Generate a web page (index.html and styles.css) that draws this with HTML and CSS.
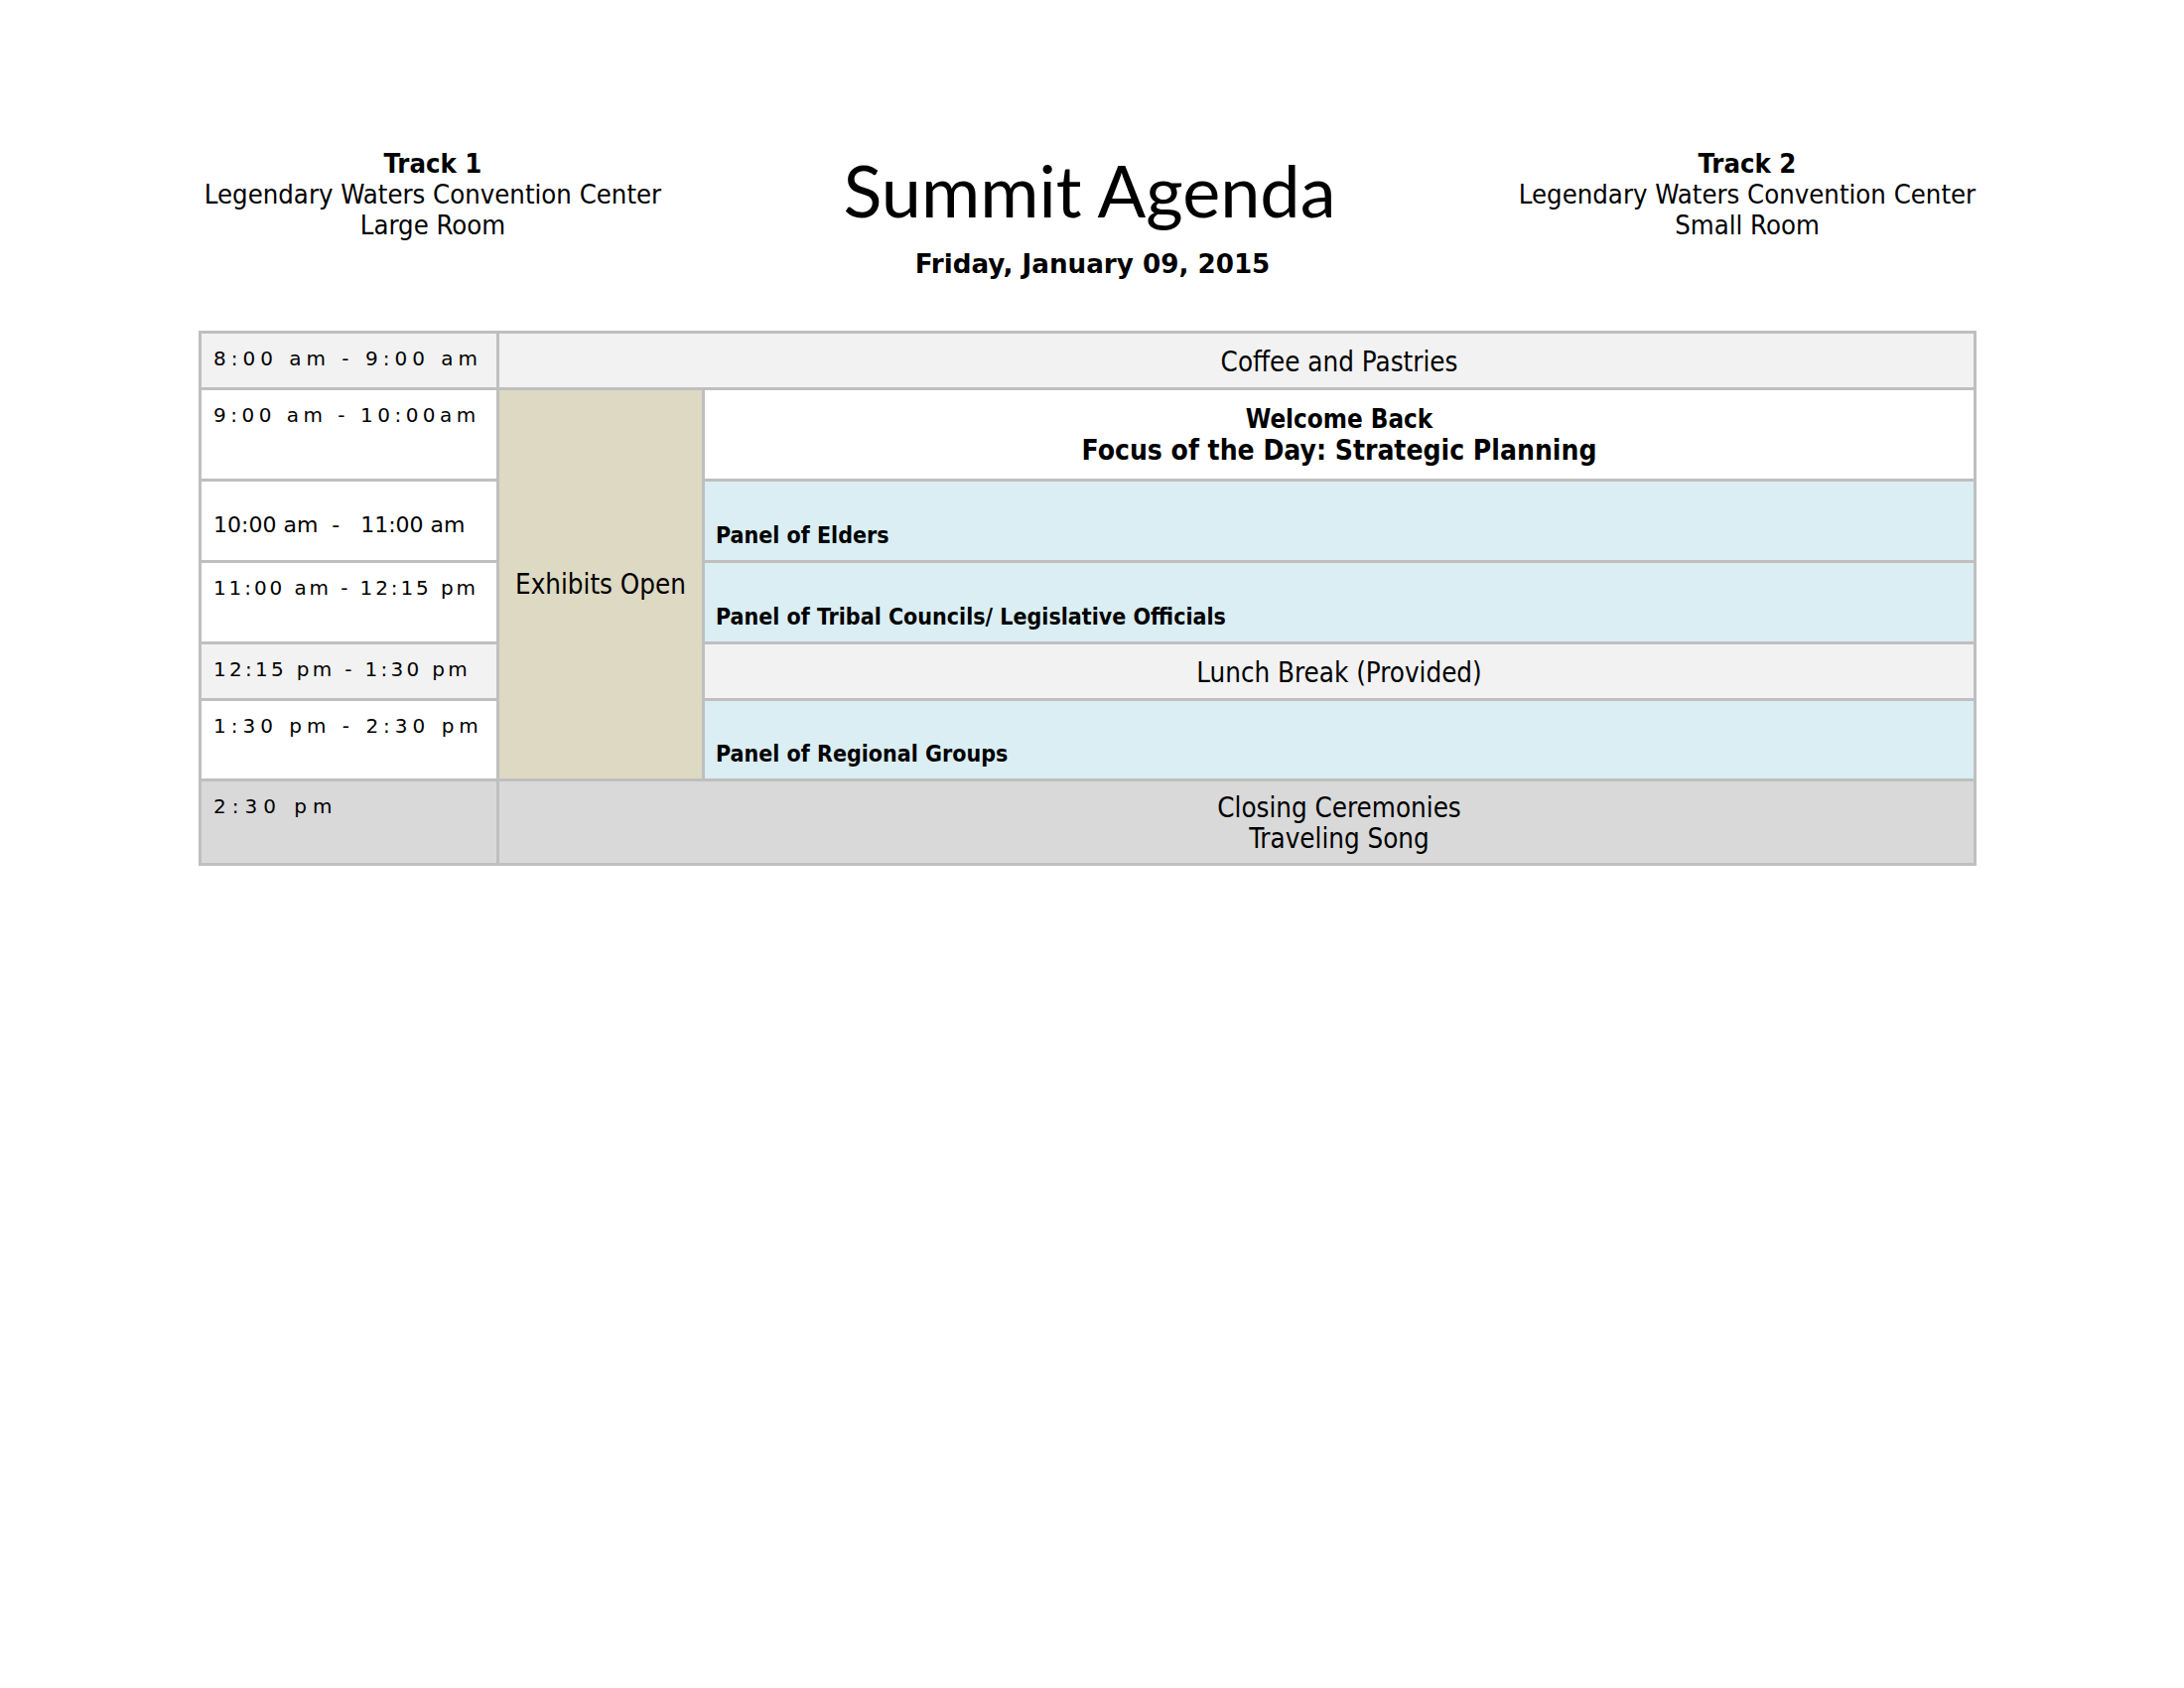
FILE: index.html
```html
<!DOCTYPE html>
<html>
<head>
<meta charset="utf-8">
<link rel="stylesheet" href="styles.css">
</head>
<body>
<div class="page">
  <header class="head">
    <div class="track">
      <div class="track-name">Track 1</div>
      <div>Legendary Waters Convention Center</div>
      <div>Large Room</div>
    </div>
    <div class="title-block">
      <h1 class="title">Summit Agenda</h1>
      <div class="date">Friday, January 09, 2015</div>
    </div>
    <div class="track">
      <div class="track-name">Track 2</div>
      <div>Legendary Waters Convention Center</div>
      <div>Small Room</div>
    </div>
  </header>

  <table class="agenda">
    <colgroup>
      <col class="c-time">
      <col class="c-exh">
      <col class="c-main">
    </colgroup>
    <tr class="r-coffee">
      <td class="time spaced ls-5">8:00 am - 9:00 am</td>
      <td colspan="2" class="center span-all">Coffee and Pastries</td>
    </tr>
    <tr class="r-welcome">
      <td class="time spaced ls-45">9:00 am - 10:00am</td>
      <td rowspan="5" class="exh">Exhibits Open</td>
      <td class="welcome"><div class="w1">Welcome Back</div><div class="w2">Focus of the Day: Strategic Planning</div></td>
    </tr>
    <tr class="r-elders">
      <td class="time plain">10:00 am&nbsp; -&nbsp;&nbsp; 11:00 am</td>
      <td class="panel">Panel of Elders</td>
    </tr>
    <tr class="r-tribal">
      <td class="time spaced ls-3">11:00 am - 12:15 pm</td>
      <td class="panel">Panel of Tribal Councils/ Legislative Officials</td>
    </tr>
    <tr class="r-lunch">
      <td class="time spaced ls-33">12:15 pm - 1:30 pm</td>
      <td class="center">Lunch Break (Provided)</td>
    </tr>
    <tr class="r-regional">
      <td class="time spaced ls-5">1:30 pm - 2:30 pm</td>
      <td class="panel">Panel of Regional Groups</td>
    </tr>
    <tr class="r-closing">
      <td class="time spaced ls-6">2:30 pm</td>
      <td colspan="2" class="center span-all">Closing Ceremonies<br>Traveling Song</td>
    </tr>
  </table>
</div>
</body>
</html>
```

FILE: styles.css
```css
html, body {
  margin: 0;
  padding: 0;
  background: #ffffff;
}

body {
  font-family: "DejaVu Sans Condensed", "DejaVu Sans", sans-serif;
  font-stretch: condensed;
  color: #000000;
}

.page {
  width: 1791px;
  padding-left: 200px;
  padding-top: 149px;
}

.head {
  display: grid;
  grid-template-columns: 472px 1fr 462px;
  align-items: start;
}

.track {
  text-align: center;
  font-size: 27.25px;
  line-height: 31px;
}

.track-name {
  font-weight: bold;
}

.title-block {
  text-align: center;
}

.title {
  margin: 6px 6px 0 0;
  font-family: "Lato", sans-serif;
  font-weight: 400;
  font-stretch: normal;
  font-size: 72px;
  line-height: 72px;
}

.date {
  margin-top: 24px;
  font-family: "DejaVu Sans", sans-serif;
  font-stretch: normal;
  font-weight: bold;
  font-size: 26.2px;
  line-height: 30px;
}

.agenda {
  margin-top: 52px;
  width: 1791px;
  border-collapse: collapse;
  table-layout: fixed;
  border: 3px solid #bfbfbf;
}

.c-time { width: 300px; }
.c-exh { width: 207px; }

.agenda td {
  border: 3px solid #bfbfbf;
  padding: 0;
  font-size: 27.5px;
  line-height: 31px;
}

.r-coffee { height: 57px; }
.r-welcome { height: 92px; }
.r-elders { height: 82px; }
.r-tribal { height: 82px; }
.r-lunch { height: 57px; }
.r-regional { height: 81px; }
.r-closing { height: 85px; }

.r-coffee td, .r-lunch td { background: #f2f2f2; }
.r-closing td { background: #d9d9d9; }
.r-welcome .welcome { background: #ffffff; }

.time {
  font-family: "DejaVu Sans", sans-serif;
  font-stretch: normal;
  padding-left: 12px !important;
  white-space: nowrap;
}

.agenda .spaced {
  vertical-align: top;
  font-size: 20px;
  line-height: 23px;
  letter-spacing: 5px;
  padding-top: 14px;
}

.agenda .ls-5 { letter-spacing: 5px; }
.agenda .ls-45 { letter-spacing: 4.5px; }
.agenda .ls-3 { letter-spacing: 2.9px; }
.agenda .ls-33 { letter-spacing: 3.3px; }
.agenda .ls-6 { letter-spacing: 6px; }

.agenda .plain {
  vertical-align: middle;
  font-size: 22px;
  line-height: 26px;
  padding-top: 8px;
  white-space: pre;
}

.agenda .center {
  text-align: center;
  vertical-align: middle;
  padding-top: 2px;
}

.agenda .span-all {
  padding-left: 207px;
}

.agenda .exh {
  background: #ddd9c3;
  text-align: center;
  vertical-align: middle;
}

.welcome {
  text-align: center;
  vertical-align: middle;
  font-weight: bold;
}

.agenda .w1 {
  font-size: 25.8px;
  line-height: 32px;
}

.agenda .w2 {
  font-size: 28px;
  line-height: 32px;
}

.agenda .panel {
  background: #daeef3;
  vertical-align: bottom;
  font-weight: bold;
  font-size: 23px;
  line-height: 26px;
  padding: 0 11px 12px 11px;
}
```
